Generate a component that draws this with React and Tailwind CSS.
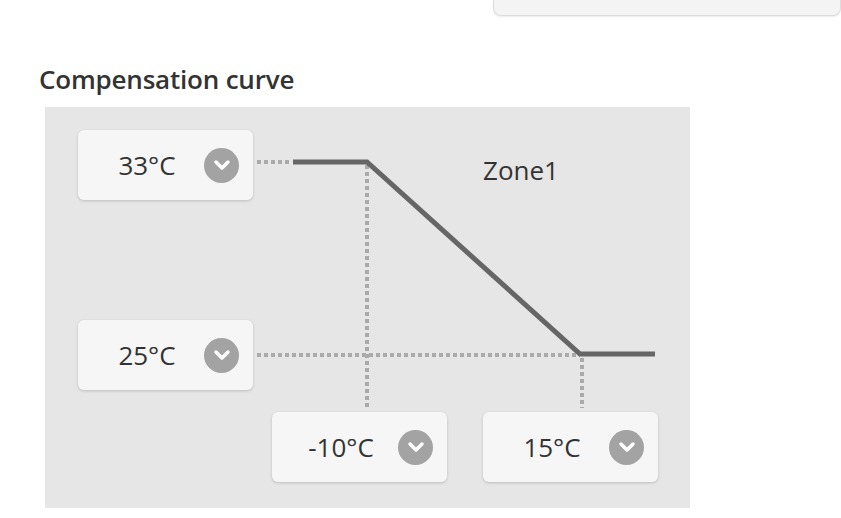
import React from "react";

function Chevron() {
  return (
    <div className="w-[35px] h-[35px] rounded-full bg-[#a3a3a3] flex items-center justify-center shrink-0">
      <svg width="18" height="12" viewBox="0 0 18 12">
        <polyline points="3,3 9,9 15,3" fill="none" stroke="#ffffff" strokeWidth="3.5" strokeLinecap="round" strokeLinejoin="round" />
      </svg>
    </div>
  );
}

function TempBox({ label, className }) {
  return (
    <div className={"absolute w-[175px] h-[70px] rounded-[6px] bg-[#f6f6f6] shadow-[0_1px_3px_rgba(0,0,0,0.18)] flex items-center " + className}>
      <span className="w-[126px] pl-[12px] text-center text-[26px] text-[#333333] leading-none">{label}</span>
      <Chevron />
    </div>
  );
}

export default function App() {
  return (
    <div className="w-[841px] h-[518px] bg-white overflow-hidden relative" style={{ fontFamily: '"Open Sans", sans-serif' }}>
      <div className="flex justify-end">
        <div className="w-[348px] h-[16px] bg-[#f4f4f4] border-x border-b border-[#dddddd] rounded-b-[8px] shadow-[0_1px_2px_rgba(0,0,0,0.08)]" />
      </div>
      <h2 className="ml-[39px] mt-[48px] text-[26px] font-semibold text-[#333333] leading-[30px] tracking-[-0.2px]">Compensation curve</h2>
      <div className="ml-[45px] mt-[13px] w-[645px] h-[401px] bg-[#e6e6e6] relative">
        <svg className="absolute left-0 top-0" width="645" height="401">
          <g stroke="#aaaaaa" strokeWidth="4" strokeDasharray="4 3" fill="none">
            <line x1="212" y1="55" x2="246" y2="55" />
            <line x1="212" y1="248" x2="535" y2="248" />
            <line x1="322" y1="58" x2="322" y2="301" />
            <line x1="537" y1="251" x2="537" y2="301" />
          </g>
          <polyline points="248,55 322,55 535,247 610,247" fill="none" stroke="#666666" strokeWidth="5" strokeLinejoin="miter" />
        </svg>
        <span className="absolute left-[438px] top-[50px] text-[26px] text-[#333333] leading-none">Zone1</span>
        <TempBox label="33°C" className="left-[33px] top-[23px]" />
        <TempBox label="25°C" className="left-[33px] top-[213px]" />
        <TempBox label="-10°C" className="left-[227px] top-[305px]" />
        <TempBox label="15°C" className="left-[438px] top-[305px]" />
      </div>
    </div>
  );
}
